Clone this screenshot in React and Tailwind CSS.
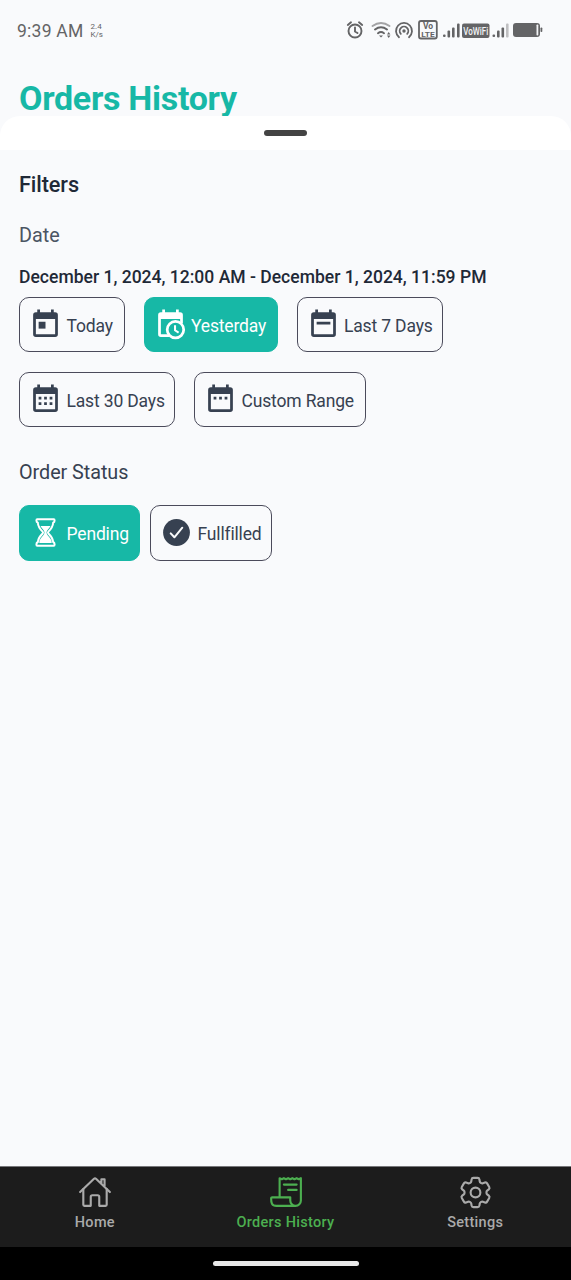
import { IoHomeOutline, IoReceiptOutline } from "react-icons/io5";
import { HiOutlineCog6Tooth } from "react-icons/hi2";

const CALENDAR_FRAME =
  "M19 3H18V1H16V3H8V1H6V3H5A2 2 0 0 0 3 5V19A2 2 0 0 0 5 21H19A2 2 0 0 0 21 19V5A2 2 0 0 0 19 3ZM19 19H5V8H19Z";

function CalendarIcon({ children }) {
  return (
    <svg viewBox="0 0 24 24" className="size-[33px] shrink-0" fill="currentColor">
      <path fillRule="evenodd" d={CALENDAR_FRAME} />
      {children}
    </svg>
  );
}

const icons = {
  today: (
    <CalendarIcon>
      <path d="M7 10h5v5H7z" />
    </CalendarIcon>
  ),
  week: (
    <CalendarIcon>
      <path d="M7 10h10v2H7z" />
    </CalendarIcon>
  ),
  month: (
    <CalendarIcon>
      <path d="M7 10h2v2H7zM11 10h2v2h-2zM15 10h2v2h-2zM7 14h2v2H7zM11 14h2v2h-2zM15 14h2v2h-2z" />
    </CalendarIcon>
  ),
  range: (
    <CalendarIcon>
      <path d="M7 10h2v2H7zM11 10h2v2h-2zM15 10h2v2h-2z" />
    </CalendarIcon>
  ),
  yesterday: (
    <svg viewBox="0 0 24 24" className="size-[33px] shrink-0" fill="currentColor">
      <path d="M19 3H18V1H16V3H8V1H6V3H5A2 2 0 0 0 3 5V19A2 2 0 0 0 5 21H11V19H5V8H19V11H21V5A2 2 0 0 0 19 3Z" />
      <circle cx="15.600" cy="15.800" r="6" fill="#17b8a6" stroke="currentColor" strokeWidth="2" />
      <path d="M15.300 12.500V16.200L17.900 17.900" fill="none" stroke="currentColor" strokeWidth="1.500" />
    </svg>
  ),
  hourglass: (
    <svg viewBox="0 0 33 33" className="size-[33px] shrink-0" fill="none">
      <path
        d="M8.200 3.200H24.800Q25.600 3.200 25.600 4.500Q25.600 6.200 24.200 6.700C23.900 10.700 22.100 13 19.400 15.600Q18.500 16.500 19.400 17.600C22.300 20.300 23.800 22.500 24.200 26Q25.600 26.700 25.600 28.500Q25.600 29.800 24.800 29.800H8.200Q7.400 29.800 7.400 28.500Q7.400 26.700 8.800 26C9.200 22.500 10.700 20.300 13.600 17.600Q14.500 16.500 13.600 15.600C10.900 13 9.100 10.700 8.800 6.700Q7.400 6.200 7.400 4.500Q7.400 3.200 8.200 3.200Z"
        stroke="currentColor"
        strokeWidth="2"
      />
      <path
        d="M11.500 10H21.500C20.300 12.600 17.700 14.300 17.500 16.300C17.500 19 19.700 20.400 21.500 22.800Q22.800 24.700 22.700 27H10.300Q10.200 24.700 11.500 22.800C13.300 20.400 15.500 19 15.500 16.300C15.300 14.300 12.700 12.600 11.500 10Z"
        fill="currentColor"
      />
    </svg>
  ),
  check: (
    <svg viewBox="0 0 33 33" className="size-[33px] shrink-0" fill="none">
      <circle cx="16.500" cy="16.500" r="13.400" fill="currentColor" />
      <path d="M10.700 17.400L14.400 21.300L22.300 11.700" stroke="#f9fafb" strokeWidth="2" strokeLinecap="round" strokeLinejoin="round" />
    </svg>
  ),
};

function Chip({ icon, label, width, active = false }) {
  const tone = active ? "border-[#17b8a6] bg-[#17b8a6] text-white" : "border-[#4b4b5b] text-[#374151]";
  return (
    <button className={`flex h-[55.400px] shrink-0 items-center gap-[4.500px] rounded-[10px] border-[1.300px] pl-[9px] ${width} ${tone}`}>
      <span className="pb-[0.500px]">{icons[icon]}</span>
      <span className="whitespace-nowrap pt-[3px] text-[17.500px] leading-6 tracking-[-0.160px]">{label}</span>
    </button>
  );
}

function StatusIcons() {
  return (
    <svg width="200" height="24" viewBox="345 18 200 24" fill="none" stroke="#646466" className="shrink-0">
      <g strokeWidth="1.900" strokeLinecap="round">
        <circle cx="355" cy="31" r="6.500" />
        <path d="M355 27.500V31.500L357.500 33M347.800 25L351 22.300M362.200 25L359 22.300" />
      </g>
      <g strokeWidth="2" strokeLinecap="round">
        <path d="M372.500 26Q381 20 389.500 26" stroke="#a3a3a5" />
        <path d="M375 29.500Q381 25 387 29.500M378 33.200Q381 31 384 33.200" />
      </g>
      <path d="M379 35.500h4l-2 2z" fill="#646466" stroke="none" />
      <path d="M387 34.500l1.700-2.500 1.700 2.500zM387 35.500l1.700 2.500 1.700-2.500z" fill="#646466" stroke="none" />
      <g strokeWidth="1.800" strokeLinecap="round">
        <path d="M399 37.200A8 8 0 1 1 409 37.200" />
        <path d="M400.800 33.800A4.300 4.300 0 1 1 407.200 33.800" />
      </g>
      <circle cx="404" cy="31" r="1.700" fill="#646466" stroke="none" />
      <rect x="419" y="21" width="17.800" height="17.500" rx="2" strokeWidth="1.800" />
      <g fill="#646466" stroke="none" fontFamily="Roboto, sans-serif" fontWeight="700" textAnchor="middle">
        <text x="428" y="29.300" fontSize="8.500">Vo</text>
        <text x="428" y="37" fontSize="8" textLength="13.500" lengthAdjust="spacingAndGlyphs">LTE</text>
      </g>
      <g fill="#646466" stroke="none">
        <rect x="443" y="34.500" width="2.600" height="2.600" rx="1" />
        <rect x="447.500" y="30.500" width="2.600" height="7" rx="1" />
        <rect x="452" y="27.500" width="2.600" height="10" rx="1" />
        <rect x="457" y="23.500" width="2.600" height="14" rx="1" />
        <rect x="462" y="23.500" width="27.500" height="14.500" rx="2" />
        <rect x="492.500" y="34.500" width="2.600" height="2.600" rx="1" />
        <rect x="497" y="30.500" width="2.600" height="7" rx="1" />
        <rect x="501.500" y="27.500" width="2.600" height="10" rx="1" />
        <rect x="506" y="23.500" width="2.600" height="14" rx="1" fill="#bfbfc1" />
        <rect x="513" y="23" width="27" height="14" rx="3" />
        <rect x="536.500" y="24.500" width="1.800" height="11" rx=".8" fill="#f3f4f6" />
        <rect x="540.500" y="27.500" width="1.800" height="4.500" rx=".8" />
      </g>
      <text x="475.700" y="35" fontSize="11" fontWeight="500" fontFamily="Roboto, sans-serif" fill="#f3f4f6" stroke="none" textAnchor="middle" textLength="25" lengthAdjust="spacingAndGlyphs">
        VoWiFi
      </text>
    </svg>
  );
}

function Tab({ icon: Icon, label, iconSize = "size-[34px]", active = false }) {
  return (
    <a className={`flex flex-1 flex-col items-center pt-2 ${active ? "text-[#4caf50]" : "pr-px text-[#aaaaaa]"}`}>
      <span className="flex h-[34px] items-center">
        <Icon className={iconSize} />
      </span>
      <span className="mt-[6px] whitespace-nowrap text-[14.500px] font-medium leading-4 tracking-[0.300px]">{label}</span>
    </a>
  );
}

export default function App() {
  return (
    <div className="flex h-[1280px] w-[571px] flex-col overflow-hidden bg-[#f9fafc] font-['Roboto',sans-serif]">
      <header className="flex h-[116px] shrink-0 flex-col">
        <div className="flex h-[60px] shrink-0 items-center justify-between pl-[17px] pr-[26px] text-[#646466]">
          <div className="flex items-center gap-[7px] pt-[2px]">
            <span className="text-[17.500px] leading-6 tracking-[0.250px]">9:39 AM</span>
            <span className="flex flex-col pb-px text-[8px] leading-[8px]">
              <span>2.4</span>
              <span>K/s</span>
            </span>
          </div>
          <StatusIcons />
        </div>
        <h1 className="shrink-0 pl-[19px] pt-[16px] text-[34px] font-bold leading-[44px] tracking-[-0.300px] text-[#17b8a6]">
          Orders History
        </h1>
      </header>

      <div className="relative flex h-[34px] shrink-0 justify-center rounded-t-[20px] bg-white pt-[14px]">
        <span className="h-[6px] w-[43px] rounded-full bg-[#434343]" />
      </div>

      <main className="flex-1 pl-[19px]">
        <h2 className="pt-[22px] text-[21.700px] font-medium leading-[26px] tracking-[-0.100px] text-[#1f2937]">Filters</h2>
        <h3 className="pt-[26px] text-[19.800px] leading-6 text-[#4b5563]">Date</h3>
        <p className="pt-[17px] text-[17.550px] font-medium leading-6 text-[#1f2937]">
          December 1, 2024, 12:00 AM - December 1, 2024, 11:59 PM
        </p>
        <div className="flex flex-wrap gap-x-[19px] gap-y-[19.400px] pt-[8px]">
          <Chip icon="today" label="Today" width="w-[105.500px]" />
          <Chip icon="yesterday" label="Yesterday" width="w-[134px]" active />
          <Chip icon="week" label="Last 7 Days" width="w-[146.500px]" />
          <Chip icon="month" label="Last 30 Days" width="w-[156px]" />
          <Chip icon="range" label="Custom Range" width="w-[172px]" />
        </div>
        <h3 className="pt-[34px] text-[19.800px] leading-6 tracking-[-0.050px] text-[#374151]">Order Status</h3>
        <div className="flex gap-[10px] pt-[20px]">
          <Chip icon="hourglass" label="Pending" width="w-[121px]" active />
          <Chip icon="check" label="Fullfilled" width="w-[122px]" />
        </div>
      </main>

      <nav className="flex h-[81px] shrink-0 border-t border-[#77777a] bg-[#1c1c1c]">
        <Tab icon={IoHomeOutline} label="Home" />
        <Tab icon={IoReceiptOutline} label="Orders History" active />
        <Tab icon={HiOutlineCog6Tooth} label="Settings" iconSize="size-[39px] [&_path]:[stroke-width:1.3]" />
      </nav>
      <div className="flex h-[33px] shrink-0 justify-center bg-black pt-[14px]">
        <span className="h-[5px] w-[146px] rounded-full bg-[#e8e8e8]" />
      </div>
    </div>
  );
}
